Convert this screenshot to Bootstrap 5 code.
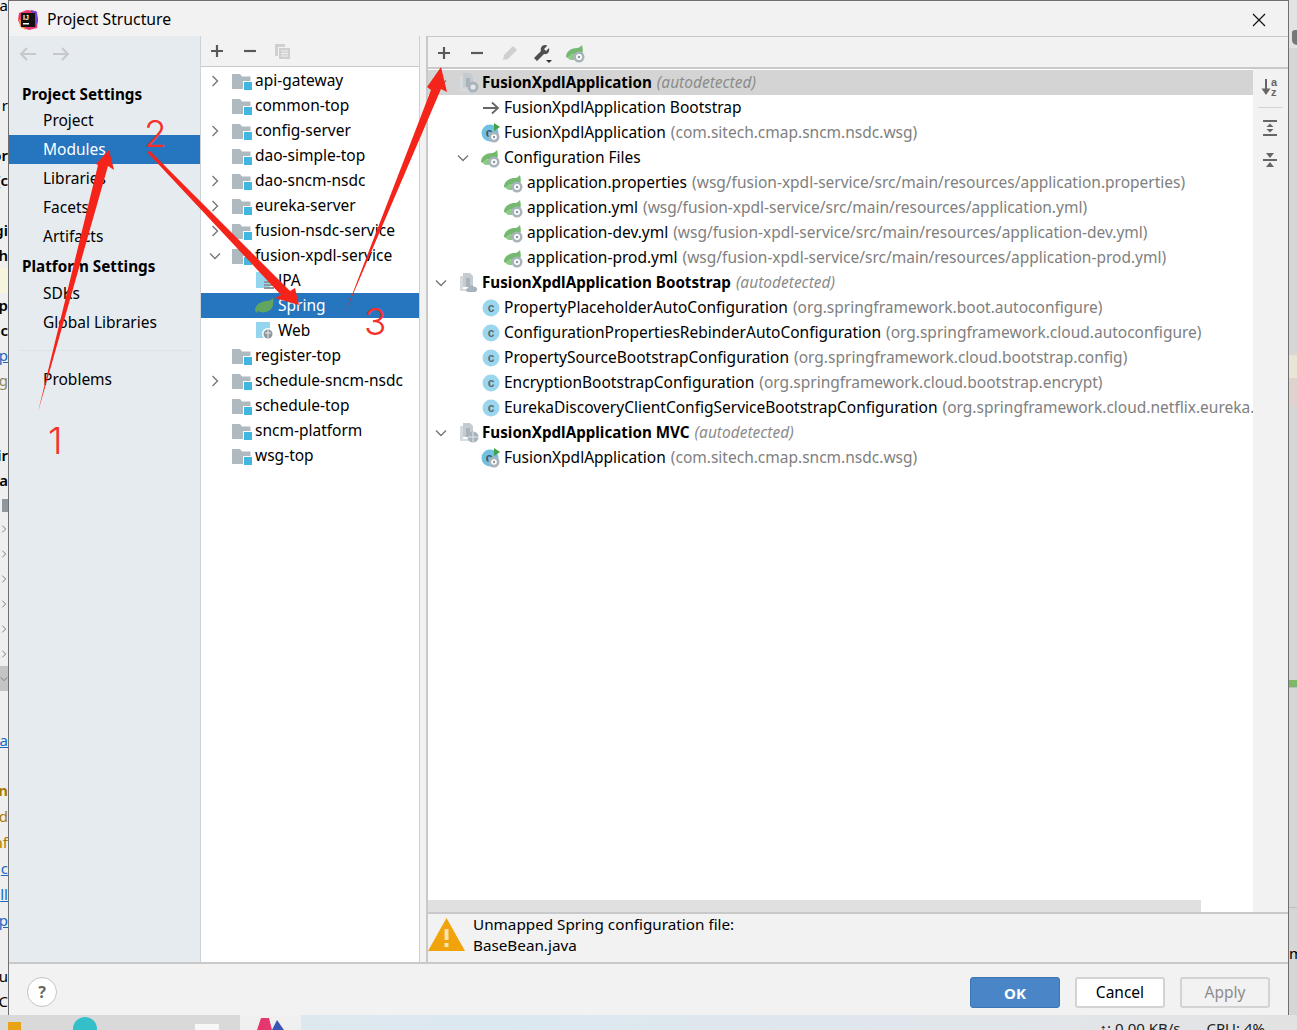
<!DOCTYPE html>
<html lang="en">
<head>
<meta charset="utf-8">
<title>Project Structure</title>
<link href="https://cdn.jsdelivr.net/npm/bootstrap@5.3.0/dist/css/bootstrap.min.css" rel="stylesheet">
<style>
html,body{margin:0;height:1030px;overflow:hidden}
body{font-family:"Noto Sans","Liberation Sans",sans-serif;font-size:15.5px;color:#000;background:#e0e0e0;position:relative;width:1297px}
.stage{height:1015px}
.sliver{width:8px;overflow:hidden;flex:none;background:#efefef;font-weight:600;font-size:15px}
.sl-row{height:25px;line-height:25px;width:8px;overflow:hidden;white-space:nowrap;display:flex;justify-content:flex-end;flex:none}
.sl-row span{flex:none}
.sl-top{margin-top:-7px}
.sl-thin{font-weight:400}
.sl-blue{color:#1768c4;font-weight:400;text-decoration:underline}
.sl-gold{color:#a87a00;font-weight:400}
.sl-olive{color:#8a8a60;font-weight:400}
.sl-sel{background:#c4c4c4}
.sl-cream{background:#f6f4dc}
.sl-box{display:block;width:6px;height:13px;background:#8f979e}
.gap-a{height:25px;flex:none}
.gap-b{margin-top:-2px}
.gap-c{height:37px;flex:none}
.gap-f{margin-top:1px}
.gap-e{height:31px;flex:none}
.sliver-r{width:8px;flex:none;background:#d6d6d6}
.sr-top{height:48px;background:#e3e3e3}
.sr-ico{height:15px;background:#777;border-radius:4px 0 0 6px;width:5px;margin-left:3px;position:relative;top:30px}
.sr-a{height:307px}
.sr-y{height:23px;background:#e9e6d6}
.sr-p{height:28px;background:#e0d3cf}
.sr-b{height:274px}
.sr-g{height:7px;background:#7cb868}
.sr-c{height:220px;border-top:1px solid #bdbdbd}
.sr-t{height:1px;background:#bdbdbd}
.sr-n{font-size:15px;line-height:18px;height:18px;overflow:hidden;white-space:nowrap;margin-top:36px}
.dlg{width:1281px;flex:none;border:1px solid #6f6f6f;border-bottom:0;background:#f2f2f2}
.titlebar{height:35px;flex:none;padding-left:8px;padding-top:2px}
.titlebar span{font-size:15.75px;margin-left:8px}
.closex{margin-left:auto;margin-right:21px;width:16px;height:16px}
.main{height:926px;flex:none}
.side{width:192px;flex:none;background:#e6ebf0;border-right:1px solid #cdd2d6}
.side-tb{height:29px;padding-left:2px;padding-top:4px}
.tb-btn{width:33px;height:28px;display:flex;align-items:center;justify-content:center;flex:none}
.sd-h{font-weight:700;height:27px;line-height:27px;padding-top:2px;padding-left:13px;font-size:15.25px}
.sd-h2{height:28px}
.sd-first{margin-top:14px}
.sd-i{height:29px;line-height:29px;padding-left:34px}
.sd-on{background:#2675bf;color:#fff}
.sd-sep{height:1px;background:#dde2e6;margin:13px 9px 14px 10px}
.mid{width:219px;flex:none;background:#fff;border-right:1px solid #cfcfcf}
.mid-tb{height:31px;background:#f2f2f2;border-bottom:1px solid #c9c9c9}
.mid-tb .tb-btn{width:32.5px}
.mid-tree{padding-top:1px}
.split{width:7px;flex:none}
.rgt{flex:1;min-width:0;border-left:2px solid #c9c9c9;border-top:1px solid #c9c9c9;margin-left:-1px}
.rgt-tb{height:32px;padding-top:2px;border-bottom:2px solid #c9c9c9}
.rgt-tb .tb-btn:first-child{margin-left:-1px}
.rgt-body{height:843px}
.rtree{width:825px;flex:none;background:#fff;overflow:hidden}
.rtree-in{flex:1;min-height:0;padding-top:1px;overflow:hidden}
.hbar{height:12px;flex:none;background:#fff}
.hbar i{display:block;width:773px;height:12px;background:#e0e0e0}
.vtb{flex:1;background:#f2f2f2}
.vb{height:32px;display:flex;align-items:center;justify-content:center;padding-right:2px}
.vb-first{margin-top:2px}
.vsep{height:1px;background:#d4d4d4;margin:4px 5px 4px 5px}
.warn{height:50px;border-top:2px solid #c9c9c9;margin-left:-2px;padding-left:2px;line-height:21px;font-size:15.25px}
.warn svg{margin-top:4px;margin-right:8px;flex:none}
.trow{height:25px;line-height:25px;white-space:nowrap;display:flex;align-items:center}
.lvl0{padding-left:6px}
.mid-tree .lvl1{padding-left:29px}
.rtree .lvl0{padding-left:5px}
.rtree .lvl1{padding-left:27px}
.rtree .lvl2{padding-left:50px}
.chev{width:18px;height:25px;flex:none;display:flex;align-items:center;justify-content:center;margin-right:7px;padding-right:2px}
.rtree .chev{margin-right:8px}
.ic{width:20px;height:20px;flex:none;margin-right:3px}
.tr-on{background:#2675bf;color:#fff}
.tr-grey{background:#d4d4d4}
.nm-b{font-weight:700;font-size:15.2px}
.hint{color:#808080;margin-left:5px}
.auto{color:#8c8c8c;font-style:italic;margin-left:5px}
.foot{flex:1;border-top:2px solid #c9c9c9;padding:5px 18px 0 18px}
.helpb{width:30px;height:30px;border-radius:50%;background:#fff;border:1px solid #c4c4c4;color:#666;font-weight:700;font-size:16px;display:flex;align-items:center;justify-content:center;padding:0}
.dbtn{width:90px;height:31px;padding:2px 0 0;border-radius:3px;font-size:15.5px;line-height:1}
.btn.b-ok{background:#4a86c7;border:1px solid #3b75b5;color:#fff;font-weight:700;font-size:15px}
.btn.b-cancel{background:#fff;border:2px solid #d3d3d3;color:#000;margin-left:15px}
.btn.b-apply,.btn.b-apply:disabled{background:#f2f2f2;border:2px solid #d3d3d3;color:#8c8c8c;opacity:1;margin-left:15px}
.tbar{height:15px;overflow:hidden;background:linear-gradient(90deg,#dfe7ec,#dce8f0 40%,#e2e6ea 80%,#e2e2e2)}
.tb-left{width:240px;background:#d9d9d9;flex:none}
.tb-act{width:61px;background:#f0f0f0;flex:none}
.tb-stat{margin-left:auto;font-size:15px;line-height:19px;padding-top:4px;white-space:nowrap;color:#222}
.tb-stat span{margin-right:26px}
.tb-stat span+span{margin-right:32px}
.notes{position:absolute;left:0;top:0;width:1297px;height:1030px;pointer-events:none}
.notes text{font-family:"Inter","Liberation Sans",sans-serif;font-size:37px;font-weight:300;fill:#f5302a}
</style>
</head>
<body>
<svg width="0" height="0" class="position-absolute">
<defs>
<symbol id="folder" viewBox="0 0 20 20"><path d="M0 3h8l2 2.500h8.500V18H0z" fill="#aeb9c0"/><rect x="11" y="10" width="9" height="9" fill="#fff"/><rect x="12" y="11" width="8" height="8" fill="#40b6e0"/></symbol>
<symbol id="cr" viewBox="0 0 12 12"><path d="M3.500 1l5 5-5 5" fill="none" stroke="#777" stroke-width="1.400"/></symbol>
<symbol id="cd" viewBox="0 0 12 12"><path d="M1 3.500l5 5 5-5" fill="none" stroke="#777" stroke-width="1.400"/></symbol>
<symbol id="leafgear" viewBox="0 0 20 20"><path d="M0 14c0-6 6-9 11-9 2 0 4-2 5-3 1 4 1 7 0 9H8c-2 0-5 2-6 4z" fill="#74b96f"/><path d="M2 15c1 2 3 2 6 2v-6c-3 0-5 2-6 4z" fill="#8ec98a"/><circle cx="13" cy="14" r="5.500" fill="#a8b3bb"/><circle cx="13" cy="14" r="3" fill="#fff"/><circle cx="13" cy="14" r="1.300" fill="#8b969e"/></symbol>
<symbol id="leaf" viewBox="0 0 20 20"><path d="M0 14C1 7 8 5 12 5c3 0 5-2 6-3 1 5 0 10-3 12-4 3-9 3-12 1l-2 2z" fill="#62a55f"/></symbol>
<symbol id="cls" viewBox="0 0 20 20"><circle cx="10" cy="10" r="8.500" fill="#9ad7ee"/><text x="10" y="14" text-anchor="middle" font-size="12" font-weight="700" fill="#5b6a72" font-family="Liberation Sans,sans-serif">c</text></symbol>
<symbol id="runcls" viewBox="0 0 20 20"><circle cx="9" cy="10" r="8.500" fill="#6fc0e3"/><text x="8" y="14" text-anchor="middle" font-size="12" font-weight="700" fill="#44545c" font-family="Liberation Sans,sans-serif">c</text><path d="M13 0l6 4-6 4z" fill="#43a047"/><circle cx="13" cy="14" r="5.500" fill="#a8b3bb"/><circle cx="13" cy="14" r="2.800" fill="#fff"/><circle cx="13" cy="14" r="1.200" fill="#8b969e"/></symbol>
<symbol id="arr" viewBox="0 0 20 20"><path d="M2 10h15M11 4.500l6 5.500-6 5.500" fill="none" stroke="#666" stroke-width="1.800"/></symbol>
<symbol id="ctx-leaf" viewBox="0 0 20 20"><path d="M4 0h7l3 3v11H4z" fill="#c4cbd1"/><path d="M1 3h3v13h8v2H1z" fill="#d6dbdf"/><path d="M7 5h4v9H7z" fill="#aab3ba"/><circle cx="14" cy="14" r="5.500" fill="#a8b3bb"/><circle cx="14" cy="14" r="2.600" fill="#e4e7ea"/></symbol>
<symbol id="ctx-cloud" viewBox="0 0 20 20"><path d="M4 0h7l3 3v11H4z" fill="#c4cbd1"/><path d="M1 3h3v13h8v2H1z" fill="#d6dbdf"/><path d="M7 5h4v9H7z" fill="#aab3ba"/><path d="M9 19c-2 0-3-3 0-4 0-3 5-4 6-1 3-1 5 4 1 5z" fill="#a8b3bb"/></symbol>
<symbol id="ctx-web" viewBox="0 0 20 20"><path d="M4 0h7l3 3v11H4z" fill="#c4cbd1"/><path d="M1 3h3v13h8v2H1z" fill="#d6dbdf"/><path d="M7 5h4v9H7z" fill="#aab3ba"/><circle cx="14" cy="14" r="5.500" fill="#a8b3bb"/><path d="M9 14h10M14 9v10" stroke="#e4e7ea" stroke-width="1"/></symbol>
</defs>
</svg>
<div class="stage d-flex">
  <div class="sliver d-flex flex-column">
    <div class="sl-row sl-top sl-thin"><span>a</span></div><div class="gap-a"></div><div class="gap-a"></div><div class="gap-a"></div>
    <div class="sl-row sl-thin"><span>r</span></div><div class="gap-a"></div>
    <div class="sl-row"><span>or</span></div><div class="sl-row"><span>[c</span></div><div class="gap-a"></div>
    <div class="sl-row"><span>gi</span></div><div class="sl-row"><span>ch</span></div><div class="gap-a sl-cream"></div>
    <div class="sl-row"><span>pp</span></div><div class="sl-row"><span>sc</span></div><div class="sl-row sl-blue"><span>p</span></div><div class="sl-row sl-olive"><span>ng</span></div><div class="gap-a"></div><div class="gap-a"></div>
    <div class="sl-row"><span>ir</span></div><div class="sl-row"><span>ja</span></div>
    <div class="sl-row align-items-center"><span class="sl-box"></span></div>
    <div class="sl-row align-items-center justify-content-start gap-b"><svg width="8" height="10"><use href="#cr"/></svg></div>
    <div class="sl-row align-items-center"><svg width="8" height="10"><use href="#cr"/></svg></div>
    <div class="sl-row align-items-center"><svg width="8" height="10"><use href="#cr"/></svg></div>
    <div class="sl-row align-items-center"><svg width="8" height="10"><use href="#cr"/></svg></div>
    <div class="sl-row align-items-center"><svg width="8" height="10"><use href="#cr"/></svg></div>
    <div class="sl-row align-items-center"><svg width="8" height="10"><use href="#cr"/></svg></div>
    <div class="sl-row align-items-center sl-sel"><svg width="8" height="10"><use href="#cd"/></svg></div>
    <div class="gap-c"></div>
    <div class="sl-row sl-blue"><span>k a</span></div><div class="gap-a"></div>
    <div class="sl-row sl-gold fw-bold"><span>n</span></div>
    <div class="sl-row sl-gold gap-f"><span>d</span></div>
    <div class="sl-row sl-gold gap-f"><span>nf</span></div>
    <div class="sl-row sl-blue gap-f"><span>c</span></div>
    <div class="sl-row sl-blue gap-f"><span>ll</span></div>
    <div class="sl-row sl-blue gap-f"><span>p</span></div>
    <div class="gap-e"></div>
    <div class="sl-row sl-thin"><span>u</span></div>
    <div class="sl-row sl-thin"><span>C</span></div>
  </div>
  <div class="dlg d-flex flex-column">
    <div class="titlebar d-flex align-items-center">
      <svg width="22" height="22" viewBox="0 0 22 22"><path d="M2 4l8-3 9 1 2 8-1 9-8 2-8-3-3-7z" fill="#e8356d"/><path d="M1 9l3 9 5 3-3-8z" fill="#f5892b"/><path d="M14 1l6 2 1 9-3 7-3-8z" fill="#7a3fd6"/><rect x="4" y="4" width="14" height="14" fill="#111"/><text x="6" y="11" font-size="7" font-weight="700" fill="#fff" font-family="Liberation Sans,sans-serif">IJ</text><rect x="6" y="14" width="6" height="1.500" fill="#fff"/></svg>
      <span>Project Structure</span>
      <svg class="closex" viewBox="0 0 16 16"><path d="M2 2l12 12M14 2L2 14" stroke="#111" stroke-width="1.200" fill="none"/></svg>
    </div>
    <div class="main d-flex">
      <div class="side d-flex flex-column">
        <div class="side-tb d-flex">
          <div class="tb-btn"><svg width="18" height="16" viewBox="0 0 18 16"><path d="M17 8H2M8 2L2 8l6 6" fill="none" stroke="#c6c9cc" stroke-width="2"/></svg></div>
          <div class="tb-btn"><svg width="18" height="16" viewBox="0 0 18 16"><path d="M1 8h15M10 2l6 6-6 6" fill="none" stroke="#c6c9cc" stroke-width="2"/></svg></div>
        </div>
        <div class="sd-h sd-first">Project Settings</div>
        <div class="sd-i">Project</div>
        <div class="sd-i sd-on">Modules</div>
        <div class="sd-i">Libraries</div>
        <div class="sd-i">Facets</div>
        <div class="sd-i">Artifacts</div>
        <div class="sd-h sd-h2">Platform Settings</div>
        <div class="sd-i">SDKs</div>
        <div class="sd-i">Global Libraries</div>
        <div class="sd-sep"></div>
        <div class="sd-i">Problems</div>
      </div>
      <div class="mid d-flex flex-column">
        <div class="mid-tb d-flex align-items-center">
          <div class="tb-btn"><svg width="14" height="14" viewBox="0 0 14 14"><path d="M7 1v12M1 7h12" stroke="#595959" stroke-width="2.200"/></svg></div>
          <div class="tb-btn"><svg width="14" height="14" viewBox="0 0 14 14"><path d="M1 7h12" stroke="#595959" stroke-width="2.200"/></svg></div>
          <div class="tb-btn"><svg width="17" height="17" viewBox="0 0 17 17"><path d="M1 1h10v3H4v9H1z" fill="#cfcfcf"/><path d="M5 5h11v11H5z" fill="#cfcfcf"/><path d="M7 8h7M7 10.500h7M7 13h7" stroke="#f2f2f2"/></svg></div>
        </div>
        <div class="mid-tree">
          <div class="trow lvl0"><span class="chev"><svg width="12" height="12"><use href="#cr"/></svg></span><svg class="ic"><use href="#folder"/></svg>api-gateway</div>
          <div class="trow lvl0"><span class="chev"></span><svg class="ic"><use href="#folder"/></svg>common-top</div>
          <div class="trow lvl0"><span class="chev"><svg width="12" height="12"><use href="#cr"/></svg></span><svg class="ic"><use href="#folder"/></svg>config-server</div>
          <div class="trow lvl0"><span class="chev"></span><svg class="ic"><use href="#folder"/></svg>dao-simple-top</div>
          <div class="trow lvl0"><span class="chev"><svg width="12" height="12"><use href="#cr"/></svg></span><svg class="ic"><use href="#folder"/></svg>dao-sncm-nsdc</div>
          <div class="trow lvl0"><span class="chev"><svg width="12" height="12"><use href="#cr"/></svg></span><svg class="ic"><use href="#folder"/></svg>eureka-server</div>
          <div class="trow lvl0"><span class="chev"><svg width="12" height="12"><use href="#cr"/></svg></span><svg class="ic"><use href="#folder"/></svg>fusion-nsdc-service</div>
          <div class="trow lvl0"><span class="chev"><svg width="12" height="12"><use href="#cd"/></svg></span><svg class="ic"><use href="#folder"/></svg>fusion-xpdl-service</div>
          <div class="trow lvl1"><span class="chev"></span><svg class="ic" viewBox="0 0 20 20"><path d="M1 1h14v16H1z" fill="#93d4ef"/><path d="M9 10h10v2H9zm0 3h10v2H9zm0 3h10v2H9z" fill="#8d979e"/></svg>JPA</div>
          <div class="trow lvl1 tr-on"><span class="chev"></span><svg class="ic"><use href="#leaf"/></svg>Spring</div>
          <div class="trow lvl1"><span class="chev"></span><svg class="ic" viewBox="0 0 20 20"><path d="M1 1h14v16H1z" fill="#93d4ef"/><circle cx="13" cy="13" r="6" fill="#fff"/><circle cx="13" cy="13" r="4.500" fill="#8d979e"/><path d="M10 12h6M13 9v8" stroke="#fff" stroke-width=".8"/></svg>Web</div>
          <div class="trow lvl0"><span class="chev"></span><svg class="ic"><use href="#folder"/></svg>register-top</div>
          <div class="trow lvl0"><span class="chev"><svg width="12" height="12"><use href="#cr"/></svg></span><svg class="ic"><use href="#folder"/></svg>schedule-sncm-nsdc</div>
          <div class="trow lvl0"><span class="chev"></span><svg class="ic"><use href="#folder"/></svg>schedule-top</div>
          <div class="trow lvl0"><span class="chev"></span><svg class="ic"><use href="#folder"/></svg>sncm-platform</div>
          <div class="trow lvl0"><span class="chev"></span><svg class="ic"><use href="#folder"/></svg>wsg-top</div>
        </div>
      </div>
      <div class="split"></div>
      <div class="rgt d-flex flex-column">
        <div class="rgt-tb d-flex align-items-center">
          <div class="tb-btn"><svg width="14" height="14" viewBox="0 0 14 14"><path d="M7 1v12M1 7h12" stroke="#595959" stroke-width="2.200"/></svg></div>
          <div class="tb-btn"><svg width="14" height="14" viewBox="0 0 14 14"><path d="M1 7h12" stroke="#595959" stroke-width="2.200"/></svg></div>
          <div class="tb-btn"><svg width="18" height="18" viewBox="0 0 18 18"><path d="M2 16l1-5L12 2l4 4-9 9z" fill="#cfcfcf"/></svg></div>
          <div class="tb-btn"><svg width="20" height="20" viewBox="0 0 20 20"><path d="M1 15l7-7c-1-3 1-6 4-6 1 0 2 0 2 1l-3 3 2 2 3-3c1 3-1 7-5 6l-7 7z" fill="#4f4f4f"/><path d="M13 17h6l-3 3z" fill="#333"/></svg></div>
          <div class="tb-btn"><svg width="20" height="20"><use href="#leafgear"/></svg></div>
        </div>
        <div class="rgt-body d-flex">
          <div class="rtree d-flex flex-column">
            <div class="rtree-in">
              <div class="trow lvl0 tr-grey"><span class="chev"><svg width="12" height="12"><use href="#cd"/></svg></span><svg class="ic"><use href="#ctx-leaf"/></svg><span class="nm-b">FusionXpdlApplication</span><span class="auto">(autodetected)</span></div>
              <div class="trow lvl1"><span class="chev"></span><svg class="ic"><use href="#arr"/></svg>FusionXpdlApplication Bootstrap</div>
              <div class="trow lvl1"><span class="chev"></span><svg class="ic"><use href="#runcls"/></svg>FusionXpdlApplication<span class="hint">(com.sitech.cmap.sncm.nsdc.wsg)</span></div>
              <div class="trow lvl1"><span class="chev"><svg width="12" height="12"><use href="#cd"/></svg></span><svg class="ic"><use href="#leafgear"/></svg>Configuration Files</div>
              <div class="trow lvl2"><span class="chev"></span><svg class="ic"><use href="#leafgear"/></svg>application.properties<span class="hint">(wsg/fusion-xpdl-service/src/main/resources/application.properties)</span></div>
              <div class="trow lvl2"><span class="chev"></span><svg class="ic"><use href="#leafgear"/></svg>application.yml<span class="hint">(wsg/fusion-xpdl-service/src/main/resources/application.yml)</span></div>
              <div class="trow lvl2"><span class="chev"></span><svg class="ic"><use href="#leafgear"/></svg>application-dev.yml<span class="hint">(wsg/fusion-xpdl-service/src/main/resources/application-dev.yml)</span></div>
              <div class="trow lvl2"><span class="chev"></span><svg class="ic"><use href="#leafgear"/></svg>application-prod.yml<span class="hint">(wsg/fusion-xpdl-service/src/main/resources/application-prod.yml)</span></div>
              <div class="trow lvl0"><span class="chev"><svg width="12" height="12"><use href="#cd"/></svg></span><svg class="ic"><use href="#ctx-cloud"/></svg><span class="nm-b">FusionXpdlApplication Bootstrap</span><span class="auto">(autodetected)</span></div>
              <div class="trow lvl1"><span class="chev"></span><svg class="ic"><use href="#cls"/></svg>PropertyPlaceholderAutoConfiguration<span class="hint">(org.springframework.boot.autoconfigure)</span></div>
              <div class="trow lvl1"><span class="chev"></span><svg class="ic"><use href="#cls"/></svg>ConfigurationPropertiesRebinderAutoConfiguration<span class="hint">(org.springframework.cloud.autoconfigure)</span></div>
              <div class="trow lvl1"><span class="chev"></span><svg class="ic"><use href="#cls"/></svg>PropertySourceBootstrapConfiguration<span class="hint">(org.springframework.cloud.bootstrap.config)</span></div>
              <div class="trow lvl1"><span class="chev"></span><svg class="ic"><use href="#cls"/></svg>EncryptionBootstrapConfiguration<span class="hint">(org.springframework.cloud.bootstrap.encrypt)</span></div>
              <div class="trow lvl1"><span class="chev"></span><svg class="ic"><use href="#cls"/></svg>EurekaDiscoveryClientConfigServiceBootstrapConfiguration<span class="hint">(org.springframework.cloud.netflix.eureka.</span></div>
              <div class="trow lvl0"><span class="chev"><svg width="12" height="12"><use href="#cd"/></svg></span><svg class="ic"><use href="#ctx-web"/></svg><span class="nm-b">FusionXpdlApplication MVC</span><span class="auto">(autodetected)</span></div>
              <div class="trow lvl1"><span class="chev"></span><svg class="ic"><use href="#runcls"/></svg>FusionXpdlApplication<span class="hint">(com.sitech.cmap.sncm.nsdc.wsg)</span></div>
            </div>
            <div class="hbar"><i></i></div>
          </div>
          <div class="vtb d-flex flex-column">
            <div class="vb vb-first"><svg width="20" height="20" viewBox="0 0 20 20"><path d="M6 2v13" stroke="#666" stroke-width="2"/><path d="M1.500 11.500h9L6 18z" fill="#666"/><text x="11" y="9" font-size="11" font-weight="700" fill="#666" font-family="Liberation Sans,sans-serif">a</text><text x="11" y="19" font-size="11" font-weight="700" fill="#666" font-family="Liberation Sans,sans-serif">z</text></svg></div>
            <div class="vsep"></div>
            <div class="vb"><svg width="18" height="18" viewBox="0 0 18 18"><path d="M2 2h14M2 16h14" stroke="#666" stroke-width="2"/><path d="M9 4.500l3.500 3.500h-7zM9 13.500l3.500-3.500h-7z" fill="#666"/></svg></div>
            <div class="vb"><svg width="18" height="18" viewBox="0 0 18 18"><path d="M2 9h14" stroke="#666" stroke-width="2"/><path d="M9 7L5 2h8zM9 11l4 5H5z" fill="#666"/></svg></div>
          </div>
        </div>
        <div class="warn d-flex">
          <svg width="37" height="33" viewBox="0 0 37 33"><path d="M18.500 0L37 33H0z" fill="#f0a30a"/><rect x="16.500" y="11" width="4" height="11" fill="#f8e3b0"/><rect x="16.500" y="25" width="4" height="4" fill="#f8e3b0"/></svg>
          <div>Unmapped Spring configuration file:<br>BaseBean.java</div>
        </div>
      </div>
    </div>
    <div class="foot d-flex align-items-center">
      <button type="button" class="btn helpb">?</button>
      <button type="button" class="btn dbtn b-ok ms-auto">OK</button>
      <button type="button" class="btn dbtn b-cancel">Cancel</button>
      <button type="button" class="btn dbtn b-apply" disabled>Apply</button>
    </div>
  </div>
  <div class="sliver-r d-flex flex-column">
    <div class="sr-top"><div class="sr-ico"></div></div>
    <div class="sr-a"></div><div class="sr-y"></div><div class="sr-p"></div><div class="sr-b"></div><div class="sr-g"></div><div class="sr-c"></div>
    <div class="sr-t"></div><div class="sr-n">m</div>
  </div>
</div>
<div class="tbar d-flex">
  <div class="tb-left">
    <svg width="240" height="15" class="d-block"><rect x="8" y="7" width="13" height="8" fill="#e8a317"/><circle cx="85" cy="14" r="12" fill="#35c0c9"/><rect x="195" y="9" width="24" height="6" fill="#f7f7f7"/></svg>
  </div>
  <div class="tb-act"><svg width="61" height="15" class="d-block"><path d="M17 15l4-12h8l3 12z" fill="#e5366d"/><path d="M32 15l5-10 7 10z" fill="#3c55b5"/></svg></div>
  <div class="tb-stat"><span>↑: 0.00 KB/s</span><span>CPU: 4%</span></div>
</div>
<svg class="notes" viewBox="0 0 1297 1030">
  <polygon fill="#f5241a" points="38,412 98,165 96,164 109,150 114,170 108,166"/>
  <polygon fill="#f5241a" points="147,152 150,151 290,291 295,288 299,305 275,298 281,295"/>
  <polygon fill="#f5241a" points="345,313 431,90 427,87 441,67 447,92 441,89"/>
  <text x="48" y="454">1</text>
  <text x="144" y="147">2</text>
  <text x="364" y="335">3</text>
</svg>
</body>
</html>
